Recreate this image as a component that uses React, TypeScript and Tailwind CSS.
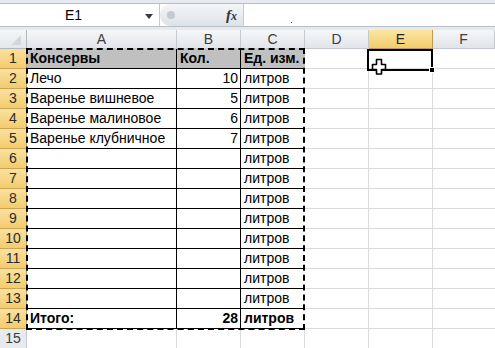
import React from 'react';

const cols = ['A', 'B', 'C', 'D', 'E', 'F'];

type Row = { a: string; b: string; c: string; bold?: boolean; head?: boolean };

const data: Row[] = [
  { a: 'Консервы', b: 'Кол.', c: 'Ед. изм.', bold: true, head: true },
  { a: 'Лечо', b: '10', c: 'литров' },
  { a: 'Варенье вишневое', b: '5', c: 'литров' },
  { a: 'Варенье малиновое', b: '6', c: 'литров' },
  { a: 'Варенье клубничное', b: '7', c: 'литров' },
  { a: '', b: '', c: 'литров' },
  { a: '', b: '', c: 'литров' },
  { a: '', b: '', c: 'литров' },
  { a: '', b: '', c: 'литров' },
  { a: '', b: '', c: 'литров' },
  { a: '', b: '', c: 'литров' },
  { a: '', b: '', c: 'литров' },
  { a: '', b: '', c: 'литров' },
  { a: 'Итого:', b: '28', c: 'литров', bold: true },
];

function Cursor() {
  return (
    <svg width="16" height="17" viewBox="0 0 16 17" className="absolute left-[2px] top-[7px]">
      <path
        d="M5.5 1.5h5v5h4v5h-4v4.5h-5v-4.5h-4v-5h4z"
        fill="#fff"
        stroke="#000"
        strokeWidth="1.6"
        strokeLinejoin="round"
      />
    </svg>
  );
}

export default function App() {
  const rows = Array.from({ length: 15 }, (_, i) => i + 1);

  return (
    <div
      className="w-[495px] h-[348px] overflow-hidden bg-white text-[14px] text-black"
      style={{ fontFamily: '"Liberation Sans", Arial, sans-serif' }}
    >
      {/* formula bar */}
      <div className="h-[30px] bg-[#e6eaef] pt-[3px] pb-[3px]">
        <div className="flex h-[24px] border-y border-[#b7bec7] bg-white">
          <div className="relative flex w-[160px] items-center justify-center border-r border-[#c5cbd3]">
            <span className="mr-[12px]">E1</span>
            <svg width="8" height="5" viewBox="0 0 8 5" className="absolute right-[6px] top-[10px]">
              <path d="M0 0h8L4 5z" fill="#3b3b3b" />
            </svg>
          </div>
          <div className="flex w-[84px] items-center justify-between rounded-l-full bg-gradient-to-b from-[#f4f6f8] to-[#dde2e8] pl-[7px] pr-[6px] border-r border-[#c5cbd3]">
            <div className="h-[8px] w-[8px] rounded-full bg-[#c3c9d1]" />
            <span
              className="text-[15px] italic font-bold text-[#333]"
              style={{ fontFamily: '"Liberation Serif", serif' }}
            >
              f<span className="text-[12px]">x</span>
            </span>
          </div>
          <div className="relative flex-1">
            <div className="absolute left-[47px] top-[18px] h-[1px] w-[1px] bg-[#555]" />
          </div>
        </div>
      </div>

      {/* grid */}
      <div className="relative grid grid-cols-[27px_150px_64px_64px_64px_64px_62px] grid-rows-[19px_repeat(15,20px)]">
        {/* column header row */}
        <div className="relative border-r border-b border-[#b1b7bf] bg-gradient-to-b from-[#f6f7f9] to-[#e3e6ea]">
          <svg width="10" height="10" viewBox="0 0 10 10" className="absolute right-[5px] bottom-[3px]">
            <path d="M10 0v10H0z" fill="#d3d7dd" />
          </svg>
        </div>
        {cols.map((c) => (
          <div
            key={c}
            className={`flex items-center justify-center border-r border-b text-[14px] ${
              c === 'E'
                ? 'border-[#c29b4a] bg-gradient-to-b from-[#fbe6a3] to-[#f3cd6b] text-[#222]'
                : 'border-[#c5cad1] bg-gradient-to-b from-[#f6f7f9] to-[#e1e4e9] text-[#3d3d3d]'
            }`}
          >
            {c}
          </div>
        ))}

        {rows.map((r) => {
          const d = data[r - 1];
          const inRange = r <= 14;
          return (
            <React.Fragment key={r}>
              <div
                className={`flex items-center justify-center border-r border-b text-[14px] ${
                  inRange
                    ? 'border-[#c9a451] bg-gradient-to-b from-[#fae0a0] to-[#f3cc6c] text-[#2b2b2b]'
                    : 'border-[#c5cad1] bg-[#e7eaee] text-[#3d3d3d]'
                }`}
              >
                {r}
              </div>
              {d ? (
                <>
                  <div
                    className={`flex items-center overflow-hidden whitespace-nowrap border-r border-b border-black pl-[3px] ${
                      d.head ? 'bg-[#c0c0c0]' : ''
                    } ${d.bold ? 'font-bold' : ''}`}
                  >
                    {d.a}
                  </div>
                  <div
                    className={`flex items-center overflow-hidden whitespace-nowrap border-r border-b border-black ${
                      d.head ? 'bg-[#c0c0c0] justify-start pl-[3px]' : 'justify-end pr-[2px]'
                    } ${d.bold ? 'font-bold' : ''}`}
                  >
                    {d.b}
                  </div>
                  <div
                    className={`flex items-center overflow-hidden whitespace-nowrap border-b border-black pl-[3px] ${
                      d.head ? 'bg-[#c0c0c0]' : ''
                    } ${d.bold ? 'font-bold' : ''}`}
                  >
                    {d.c}
                  </div>
                </>
              ) : (
                <>
                  <div className="border-r border-b border-[#d9dbde]" />
                  <div className="border-r border-b border-[#d9dbde]" />
                  <div className="border-r border-b border-[#d9dbde]" />
                </>
              )}
              <div className="border-r border-b border-[#d9dbde]" />
              <div className="border-r border-b border-[#d9dbde]" />
              <div className="border-b border-[#d9dbde]" />
            </React.Fragment>
          );
        })}

        {/* copy marquee over A1:C14 */}
        <div className="pointer-events-none absolute left-[26px] top-[18px] h-[282px] w-[279px] border-[2px] border-dashed border-black" />

        {/* active cell E1 */}
        <div className="pointer-events-none absolute left-[367px] top-[19px] z-10 h-[22px] w-[66px] border-[2px] border-black">
          <Cursor />
          <div className="absolute -right-[4px] -bottom-[4px] h-[6px] w-[6px] border border-white bg-black" />
        </div>
      </div>
    </div>
  );
}
